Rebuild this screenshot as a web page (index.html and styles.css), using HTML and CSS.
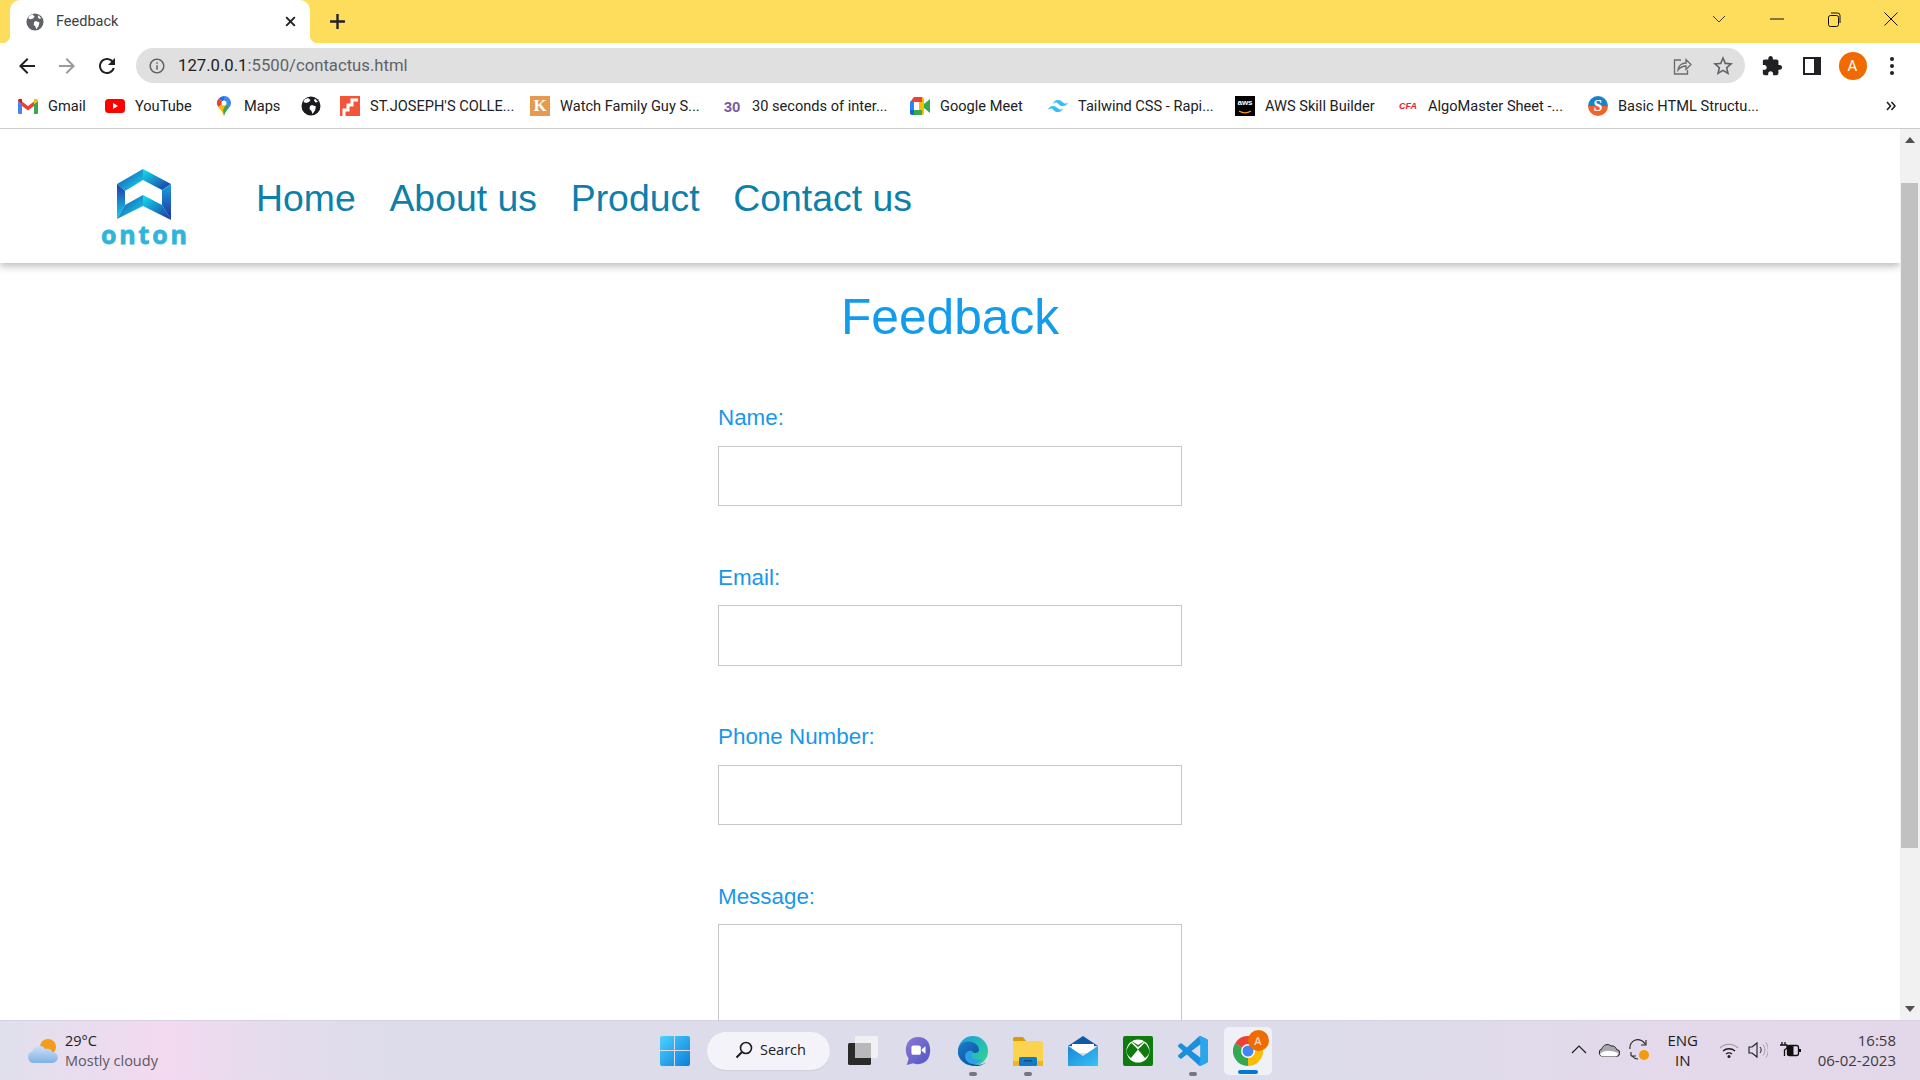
FILE: index.html
```html
<!DOCTYPE html>
<html lang="en">
<head>
<meta charset="utf-8">
<title>Feedback</title>
<link rel="stylesheet" href="styles.css">
</head>
<body>
<div class="screen">
  <header class="tabstrip">
    <div class="tab">
      <svg class="ico18" viewBox="0 0 20 20"><circle cx="10" cy="10" r="9.5" fill="#5f6368"/><path d="M7 1.5 9.5 4 8 6 5 7 2.5 6 3.500 3.500ZM11 9l4 1.500-1 4-2.500 3.500-1-3-2-2 .5-3ZM14 2.500l3 3.500-2.500 .5-1.500-2Z" fill="#fff"/></svg>
      <span class="tab-title">Feedback</span>
      <svg class="tab-close" viewBox="0 0 12 12"><path d="M2 2l8 8M10 2l-8 8" stroke="#202124" stroke-width="1.800"/></svg>
    </div>
    <svg class="tab-new" viewBox="0 0 16 16"><path d="M8 1v14M1 8h14" stroke="#202124" stroke-width="2.200"/></svg>
    <div class="winctl">
      <span class="wincell"><svg width="14" height="8" viewBox="0 0 14 8"><path d="M1 1l6 6 6-6" fill="none" stroke="#3c3c3c"/></svg></span>
      <span class="wincell"><svg width="14" height="2" viewBox="0 0 14 2"><path d="M0 1h14" stroke="#111"/></svg></span>
      <span class="wincell"><svg width="14" height="15" viewBox="0 0 14 15"><rect x="1.500" y="3.500" width="10" height="11" rx="2" fill="none" stroke="#111"/><path d="M4 1h6.500a2.500 2.500 0 0 1 2.500 2.500V11" fill="none" stroke="#111"/></svg></span>
      <span class="wincell"><svg width="14" height="14" viewBox="0 0 14 14"><path d="M.5.500l13 13M13.500.500l-13 13" stroke="#111"/></svg></span>
    </div>
  </header>

  <div class="toolbar">
    <span class="tbcell"><svg class="ico24" viewBox="0 0 24 24"><path fill="#202124" d="M20 11H7.830l5.590-5.590L12 4l-8 8 8 8 1.410-1.410L7.830 13H20v-2z"/></svg></span>
    <span class="tbcell"><svg class="ico24" viewBox="0 0 24 24"><path fill="#9a9a9a" d="M4 11h12.170l-5.590-5.590L12 4l8 8-8 8-1.410-1.410L16.170 13H4v-2z"/></svg></span>
    <span class="tbcell"><svg class="ico24" viewBox="0 0 24 24"><path fill="#202124" d="M17.650 6.350C16.200 4.900 14.210 4 12 4c-4.420 0-7.990 3.580-7.990 8s3.570 8 7.990 8c3.730 0 6.840-2.550 7.730-6h-2.080c-.82 2.330-3.040 4-5.650 4-3.310 0-6-2.690-6-6s2.690-6 6-6c1.660 0 3.140.69 4.220 1.780L13 11h7V4l-2.350 2.350z"/></svg></span>
    <div class="urlbar">
      <svg class="ico18 url-info" viewBox="0 0 24 24"><path fill="#5f6368" d="M11 7h2v2h-2zm0 4h2v6h-2zm1-9C6.480 2 2 6.480 2 12s4.480 10 10 10 10-4.480 10-10S17.520 2 12 2zm0 18c-4.410 0-8-3.590-8-8s3.590-8 8-8 8 3.590 8 8-3.590 8-8 8z"/></svg>
      <span class="url-text"><span class="url-host">127.0.0.1</span>:5500/contactus.html</span>
      <svg class="url-share" viewBox="0 0 20 20"><path d="M9 4H2.500v14h13v-4" fill="none" stroke="#6b6b6b" stroke-width="1.300"/><path d="M6 14c.5-4.500 4-7 8-7V3.500l5 5-5 5V10c-3.500 0-6 1.500-8 4z" fill="none" stroke="#6b6b6b" stroke-width="1.300"/></svg>
      <svg class="ico24 url-star" viewBox="0 0 24 24"><path fill="#5f6368" d="M22 9.240l-7.190-.62L12 2 9.190 8.630 2 9.240l5.460 4.730L5.820 21 12 17.270 18.180 21l-1.630-7.030L22 9.240zM12 15.400l-3.760 2.270 1-4.280-3.320-2.880 4.380-.38L12 6.100l1.710 4.040 4.380.38-3.320 2.880 1 4.280L12 15.400z"/></svg>
    </div>
    <span class="tbcell"><svg class="ico22" viewBox="0 0 24 24"><path fill="#202124" d="M20.500 11H19V7c0-1.100-.9-2-2-2h-4V3.500C13 2.120 11.880 1 10.500 1S8 2.120 8 3.500V5H4c-1.100 0-1.990.9-1.990 2v3.800H3.500c1.490 0 2.700 1.210 2.700 2.700s-1.210 2.700-2.700 2.700H2V20c0 1.100.9 2 2 2h3.800v-1.500c0-1.490 1.210-2.700 2.700-2.700 1.490 0 2.700 1.210 2.700 2.700V22H17c1.100 0 2-.9 2-2v-4h1.500c1.380 0 2.500-1.120 2.500-2.500S21.880 11 20.500 11z"/></svg></span>
    <span class="tbcell"><svg class="ico18" viewBox="0 0 18 18"><rect x="1" y="1" width="16" height="16" fill="none" stroke="#202124" stroke-width="2"/><rect x="11" y="1" width="6" height="16" fill="#202124"/></svg></span>
    <span class="tbcell"><span class="avatar">A</span></span>
    <span class="tbcell"><svg class="ico22" viewBox="0 0 22 22"><circle cx="11" cy="4" r="2" fill="#202124"/><circle cx="11" cy="11" r="2" fill="#202124"/><circle cx="11" cy="18" r="2" fill="#202124"/></svg></span>
  </div>

  <nav class="bookmarks">
    <a class="bm bm-gmail"><svg class="ico20" viewBox="0 0 20 16"><path d="M0 3v11.500A1.500 1.500 0 0 0 1.500 16H4V6Z" fill="#4285f4"/><path d="M20 3v11.500a1.500 1.500 0 0 1-1.500 1.500H16V6Z" fill="#34a853"/><path d="M4 8V3.500L10 8l6-4.500V8l-6 4.500Z" fill="#ea4335"/><path d="M0 3C0 .8 2.400 0 4 1.200V6Z" fill="#c5221f"/><path d="M20 3c0-2.200-2.400-3-4-1.800V6Z" fill="#fbbc04"/></svg><span>Gmail</span></a>
    <a class="bm bm-yt"><svg class="ico20" viewBox="0 0 20 16"><rect y="1" width="20" height="14" rx="3.500" fill="#f00"/><path d="M8 5l5 3-5 3z" fill="#fff"/></svg><span>YouTube</span></a>
    <a class="bm bm-maps"><svg class="ico20" viewBox="0 0 20 20"><path d="M10 0a7 7 0 0 1 5.300 11.500L10 6.500Z" fill="#4285f4"/><path d="M10 0a7 7 0 0 0-5.300 2.500L10 7Z" fill="#1a73e8"/><path d="M4.700 2.500A7 7 0 0 0 4.300 11L10 7Z" fill="#ea4335"/><path d="M4.300 11C6 13.500 8 15 10 20l3-7.500L10 7Z" fill="#fbbc04"/><path d="M15.300 11.500C13 14 11 16 10 20l-1-6 3-6Z" fill="#34a853"/><circle cx="10" cy="7" r="2.500" fill="#fff"/></svg><span>Maps</span></a>
    <a class="bm bm-globe"><svg class="ico20" viewBox="0 0 20 20"><circle cx="10" cy="10" r="9.500" fill="#1b1b1f"/><path d="M7 2 9.500 4 8 6 5 7 2.500 6 3.500 3.500ZM11 9l4 1.500-1 4-2.500 3.500-1-3-2-2 .5-3ZM14 2.500l3 3.500-2.500 .5-1.500-2Z" fill="#fff"/></svg></a>
    <a class="bm bm-st"><svg class="ico20" viewBox="0 0 20 20"><rect width="20" height="20" fill="#f4553a"/><path d="M4 20v-6h4v-5h4V4h6" fill="none" stroke="#fff" stroke-width="3"/></svg><span>ST.JOSEPH'S COLLE...</span></a>
    <a class="bm bm-k"><span class="fav-k">K</span><span>Watch Family Guy S...</span></a>
    <a class="bm bm-30"><span class="fav-30">30</span><span>30 seconds of inter...</span></a>
    <a class="bm bm-meet"><svg class="ico20" viewBox="0 0 20 18"><path d="M4 0h8v5H4z" fill="#ea4335"/><path d="M4 0v5H0Z" fill="#ea4335"/><path d="M0 5h4v8H0z" fill="#2684fc"/><path d="M0 13h4v5H2a2 2 0 0 1-2-2Z" fill="#1967d2"/><path d="M4 13h8v5H4z" fill="#34a853"/><path d="M12 0a2 2 0 0 1 2 2v14a2 2 0 0 1-2 2V13H9V5h3Z" fill="#fbbc04"/><path d="M14 7l6-5v14l-6-5Z" fill="#34a853"/></svg><span>Google Meet</span></a>
    <a class="bm bm-tw"><svg class="ico20" viewBox="0 0 20 14"><path d="M10 1C7.300 1 5.700 2.300 5 5c1-1.300 2.200-1.800 3.500-1.500 .8.200 1.300.8 1.900 1.400C11.400 5.800 12.500 7 15 7c2.700 0 4.300-1.300 5-4-1 1.300-2.200 1.800-3.500 1.500-.8-.2-1.300-.8-1.900-1.400C13.600 2.200 12.500 1 10 1ZM5 7c-2.700 0-4.300 1.300-5 4 1-1.300 2.200-1.800 3.500-1.500 .8.200 1.300.8 1.900 1.400C6.400 11.800 7.500 13 10 13c2.700 0 4.300-1.300 5-4-1 1.300-2.200 1.800-3.500 1.500-.8-.2-1.300-.8-1.900-1.400C8.600 8.200 7.500 7 5 7Z" fill="#38bdf8"/></svg><span>Tailwind CSS - Rapi...</span></a>
    <a class="bm bm-aws"><span class="fav-aws">aws<svg class="aws-smile" viewBox="0 0 14 4"><path d="M1 1c4 2.500 8 2.500 12 0" fill="none" stroke="#f90" stroke-width="1.300"/></svg></span><span>AWS Skill Builder</span></a>
    <a class="bm bm-cfa"><span class="fav-cfa">CFA</span><span>AlgoMaster Sheet -...</span></a>
    <a class="bm bm-s"><span class="fav-s">S</span><span>Basic HTML Structu...</span></a>
    <svg class="bm-more" viewBox="0 0 10 10"><path d="M1 1l3.500 4L1 9M5.500 1 9 5 5.500 9" fill="none" stroke="#202124" stroke-width="1.600"/></svg>
  </nav>

  <div class="viewport">
    <main class="page">
      <div class="navbar">
        <a class="logo">
          <svg class="logo-mark" viewBox="37 19 54 52">
            <defs>
              <linearGradient id="lg1" x1="0" y1="0" x2="1" y2="1"><stop offset="0" stop-color="#1f3fae"/><stop offset="1" stop-color="#10e4ee"/></linearGradient>
              <linearGradient id="lg2" x1="1" y1="1" x2="0" y2="0"><stop offset="0" stop-color="#1c2f9f"/><stop offset="1" stop-color="#12e2ee"/></linearGradient>
              <linearGradient id="lg3" x1="0" y1="0" x2="0" y2="1"><stop offset="0" stop-color="#2039a8"/><stop offset="1" stop-color="#14d6ea"/></linearGradient>
              <linearGradient id="lg4" x1="0" y1="0" x2="0" y2="1"><stop offset="0" stop-color="#1aa0dc"/><stop offset="1" stop-color="#1f2ea0"/></linearGradient>
            </defs>
            <path d="M63 19 37 34 45 41 63 30Z" fill="url(#lg1)"/>
            <path d="M63 19 91 34 82 40 63 30Z" fill="url(#lg2)"/>
            <path d="M37 34 45 41V55L37 69Z" fill="url(#lg3)"/>
            <path d="M91 34 82 40V55L91 70Z" fill="url(#lg4)"/>
            <path d="M37 69 63 56V45L45 55Z" fill="url(#lg1)"/>
            <path d="M63 45 82 55 91 70 63 56Z" fill="url(#lg2)"/>
          </svg>
          <span class="logo-word">onton</span>
        </a>
        <a class="nav-link">Home</a>
        <a class="nav-link">About us</a>
        <a class="nav-link">Product</a>
        <a class="nav-link">Contact us</a>
      </div>
      <h1 class="title">Feedback</h1>
      <form class="form">
        <div class="field"><label class="label">Name:</label><input class="control" type="text"></div>
        <div class="field"><label class="label">Email:</label><input class="control" type="text"></div>
        <div class="field"><label class="label">Phone Number:</label><input class="control" type="text"></div>
        <div class="field"><label class="label">Message:</label><textarea class="control control-area"></textarea></div>
      </form>
    </main>
    <aside class="scrollbar">
      <svg class="sb-arrow sb-up" viewBox="0 0 10 6"><path d="M5 0l5 6H0z" fill="#505050"/></svg>
      <div class="sb-thumb"></div>
      <svg class="sb-arrow sb-down" viewBox="0 0 10 6"><path d="M5 6l5-6H0z" fill="#505050"/></svg>
    </aside>
  </div>

  <footer class="taskbar">
    <div class="weather">
      <svg class="weather-ico" viewBox="0 0 32 26"><defs><linearGradient id="wc" x1="0" y1="0" x2="0" y2="1"><stop offset="0" stop-color="#cfe0f7"/><stop offset="1" stop-color="#7fb2e6"/></linearGradient></defs><circle cx="22" cy="9" r="8" fill="#f59b1c"/><path d="M8 25a6 6 0 0 1-1.500-11.800C8 7 16 6 19 11c3-1 6.500 0 7.500 3A5.500 5.500 0 0 1 26 25Z" fill="url(#wc)"/></svg>
      <div class="weather-text"><span class="temp">29°C</span><span class="cond">Mostly cloudy</span></div>
    </div>
    <div class="apps">
      <span class="app app-win"><svg class="ico30" viewBox="0 0 30 30"><defs><linearGradient id="w1" x1="0" y1="0" x2="1" y2="1"><stop offset="0" stop-color="#4cd2ff"/><stop offset="1" stop-color="#0a7fd8"/></linearGradient></defs><path d="M0 2a2 2 0 0 1 2-2h12v14H0ZM15 0h13a2 2 0 0 1 2 2v12H15ZM0 15h14v15H2a2 2 0 0 1-2-2ZM15 15h15v13a2 2 0 0 1-2 2H15Z" fill="url(#w1)"/></svg></span>
      <span class="searchpill"><svg class="ico18" viewBox="0 0 18 18"><circle cx="11" cy="7" r="5.500" fill="none" stroke="#1c1c1c" stroke-width="1.600"/><path d="M7 11l-5.500 5.500" stroke="#1c1c1c" stroke-width="2"/></svg><span>Search</span></span>
      <span class="app"><svg class="ico30" viewBox="0 0 30 30"><rect x="0" y="7" width="23" height="22" rx="1.500" fill="#2a2a2a"/><rect x="7" y="0" width="23" height="22" rx="1.500" fill="#f4f4f6" fill-opacity=".85"/><rect x="7" y="7" width="16" height="15" fill="#b9b9bd"/></svg></span>
      <span class="app"><svg class="ico30" viewBox="0 0 30 32"><defs><linearGradient id="tm" x1="0" y1="0" x2="1" y2="1"><stop offset="0" stop-color="#8c78d8"/><stop offset="1" stop-color="#4f56c4"/></linearGradient></defs><path d="M15 1C7 1 2 7 2 15c0 4 1.500 7 3 9l-2 7 7-2c2 .8 3.500 1 5 1 8 0 13-6 13-15S23 1 15 1Z" fill="url(#tm)"/><rect x="8" y="10" width="10" height="10" rx="2" fill="#fff"/><path d="M19 14l4-3v8l-4-3Z" fill="#fff"/></svg></span>
      <span class="app"><svg class="ico30" viewBox="0 0 30 30"><defs><linearGradient id="ed1" x1="0" y1="0" x2="1" y2="1"><stop offset="0" stop-color="#1b9de2"/><stop offset="1" stop-color="#2fd88c"/></linearGradient><linearGradient id="ed2" x1="0" y1="0" x2="1" y2="1"><stop offset="0" stop-color="#1a7fd0"/><stop offset="1" stop-color="#0c3f8f"/></linearGradient></defs><circle cx="15" cy="15" r="15" fill="url(#ed1)"/><path d="M0 14C1 7 8 4 14 6c5 1.500 7 5 7 8 0 2-2 3-4 3-1.500 0-3-1-3-2-4 0-6 3-5 7 1 4 6 7 11 7 3 0 6-1 8-3-3 3.500-7 4-9 4C7 30-1 23 0 14Z" fill="url(#ed2)"/><path d="M14 15c-1.500 2-1 5 1 7 2 1.500 6 2 9 1-2 3-5 5-9 5-5 0-8-4-8-8 0-3 3-6 7-5Z" fill="#2d9fe8"/></svg></span>
      <span class="app"><svg class="ico30" viewBox="0 0 30 30"><path d="M0 3a2 2 0 0 1 2-2h8l3 4H0Z" fill="#d99a0b"/><path d="M0 5h28a2 2 0 0 1 2 2v22H2a2 2 0 0 1-2-2Z" fill="#fcd34f"/><rect y="25" width="30" height="5" fill="#f0b820"/><rect x="6" y="21" width="18" height="9" rx="1.500" fill="#1479c9"/><rect x="11" y="24" width="8" height="1.500" fill="#0c4f8f"/></svg></span>
      <span class="app"><svg class="ico30" viewBox="0 0 30 30"><defs><linearGradient id="ml" x1="0" y1="0" x2="1" y2="1"><stop offset="0" stop-color="#1a86d4"/><stop offset="1" stop-color="#36c3f7"/></linearGradient></defs><path d="M15 0 30 10H0Z" fill="#0e5aa8"/><path d="M4 8h22v9H4Z" fill="#fff"/><path d="M0 10 15 20 30 10V30H0Z" fill="url(#ml)"/></svg></span>
      <span class="app"><svg class="ico30" viewBox="0 0 30 30"><rect width="30" height="30" rx="2" fill="#107c10"/><circle cx="15" cy="15" r="11.500" fill="#fff"/><path d="M7.500 4.500 15 11l7.500-6.500L15 9ZM3.500 15c1-3.500 2.500-6 5-8L15 13.500 8 22c-2.500-2-4.500-4-4.500-7ZM26.500 15c-1-3.500-2.500-6-5-8L15 13.500 22 22c2.500-2 4.500-4 4.500-7Z" fill="#107c10"/></svg></span>
      <span class="app"><svg class="ico30" viewBox="0 0 100 100"><path d="M96.500 10.800 75.900.9a6.200 6.200 0 0 0-7.100 1.200L29.500 38 12.300 25a4.200 4.200 0 0 0-5.300.2l-5.500 5a4.200 4.200 0 0 0 0 6.200L16.400 50 1.500 63.600a4.200 4.200 0 0 0 0 6.200l5.500 5a4.200 4.200 0 0 0 5.300.2l17.200-13 39.300 35.900a6.200 6.200 0 0 0 7.100 1.200l20.600-9.900a6.200 6.200 0 0 0 3.500-5.600V16.400a6.200 6.200 0 0 0-3.500-5.600ZM75 72.700 45.200 50 75 27.300Z" fill="#1a8fdc"/><path d="M70 1.500c2-1.200 4-1.300 5.900-.6l20.600 9.900A6.200 6.200 0 0 1 100 16.400v67.200a6.200 6.200 0 0 1-3.500 5.600L75.900 99.100c-2 .7-4 .6-5.900-.6L75 72.700V27.300Z" fill="#2aa6ec"/></svg></span>
      <span class="app app-active">
        <svg class="ico30" viewBox="0 0 30 30"><path d="M15 15 2 7.500A15 15 0 0 1 28 7.500Z" fill="#ea4335"/><path d="M15 15 28 7.500A15 15 0 0 1 15 30Z" fill="#fbbc04"/><path d="M15 15 15 30A15 15 0 0 1 2 7.500Z" fill="#34a853"/><circle cx="15" cy="15" r="7" fill="#fff"/><circle cx="15" cy="15" r="5.500" fill="#4285f4"/></svg>
        <span class="chrome-badge">A</span>
      </span>
    </div>
    <div class="tray">
      <svg class="tray-chev" viewBox="0 0 16 9"><path d="M1 8l7-7 7 7" fill="none" stroke="#1c1c1c" stroke-width="1.200"/></svg>
      <svg class="tray-cloud" viewBox="0 0 22 14"><path d="M5 13.500a4 4 0 0 1-1-7.800C5 2 10 0 13 3c3-.5 5 1 5.500 3.500A3.500 3.500 0 0 1 18 13.500Z" fill="#a9a7ae" stroke="#222"/><path d="M2 11c4-4 10-4 18-1 0 2-1 3.500-2 3.500H5c-1.500 0-2.500-1-3-2.500Z" fill="#fff"/></svg>
      <span class="tray-sync"><svg viewBox="0 0 22 22"><path d="M2 10A8 8 0 0 1 17 5M18 1v5h-5M3 17h5M3 17v-4M4 17a8 8 0 0 0 6 3" fill="none" stroke="#222" stroke-width="1.100"/><circle cx="16" cy="16" r="5" fill="#f59a0c"/></svg></span>
      <span class="tray-lang"><span>ENG</span><span>IN</span></span>
      <svg class="tray-wifi" viewBox="0 0 20 16"><path d="M1 6c5-5 13-5 18 0" fill="none" stroke="#9a96a0" stroke-width="1.200"/><path d="M4 9c3.500-3 8.500-3 12 0M7 12c2-1.500 4-1.500 6 0" fill="none" stroke="#1c1c1c" stroke-width="1.300"/><circle cx="10" cy="14.500" r="1.500" fill="#1c1c1c"/></svg>
      <svg class="tray-vol" viewBox="0 0 20 18"><path d="M1 6h3l5-4v14l-5-4H1Z" fill="none" stroke="#1c1c1c" stroke-width="1.100"/><path d="M12 6c1.500 2 1.500 4 0 6" fill="none" stroke="#1c1c1c"/><path d="M15 3.500c2.500 3.500 2.500 7.500 0 11M18 1.500c3 4.500 3 10.500 0 15" fill="none" stroke="#a5a1ab"/></svg>
      <svg class="tray-bat" viewBox="0 0 22 16"><path d="M2 0v3M5 0v3M0 3h7v3L4.500 8v6" fill="none" stroke="#111" stroke-width="1.300"/><rect x="7.500" y="3.500" width="11" height="10" rx="2" fill="none" stroke="#111" stroke-width="1.300"/><rect x="7.500" y="3.500" width="6" height="10" fill="#111"/><rect x="19" y="7" width="2" height="3" fill="#111"/></svg>
      <span class="tray-time"><span>16:58</span><span>06-02-2023</span></span>
    </div>
  </footer>
</div>
</body>
</html>
```

FILE: styles.css
```css
* { box-sizing: border-box; }
html, body { margin: 0; height: 100%; overflow: hidden; }
body { font-family: "Liberation Sans", Arial, sans-serif; background: #fff; }
svg { display: block; flex: none; }
a { color: inherit; text-decoration: none; }

.screen { width: 1920px; height: 1080px; display: flex; flex-direction: column; }

.ico18 { width: 18px; height: 18px; }
.ico20 { width: 20px; height: 20px; }
.ico22 { width: 22px; height: 22px; }
.ico24 { width: 24px; height: 24px; }
.ico30 { width: 30px; height: 30px; }

/* tab strip */
.tabstrip { height: 43px; flex: none; background: #ffdd5c; display: flex; align-items: flex-end; padding-left: 10px; font-family: Roboto, "Open Sans", sans-serif; }
.tab { position: relative; width: 300px; height: 43px; background: #fff; border-radius: 10px 10px 0 0; display: flex; align-items: center; padding: 0 13px 0 16px; color: #3c4043; font-size: 14.500px; }
.tab::before, .tab::after { content: ""; position: absolute; bottom: 0; width: 8px; height: 8px; }
.tab::before { left: -8px; background: radial-gradient(circle at 0 0, #ffdd5c 8px, #fff 8.500px); }
.tab::after { right: -8px; background: radial-gradient(circle at 100% 0, #ffdd5c 8px, #fff 8.500px); }
.tab-title { margin-left: 12px; flex: 1; }
.tab-close { width: 13px; height: 13px; }
.tab-new { width: 17px; height: 17px; margin: 0 0 13px 19px; }
.winctl { margin-left: auto; display: flex; height: 38px; align-items: center; align-self: flex-start; padding-right: 0; }
.wincell { width: 57.300px; display: flex; justify-content: center; }

/* toolbar */
.toolbar { height: 45px; flex: none; background: #fff; display: flex; align-items: center; padding: 0 8px 0 7px; font-family: Roboto, "Open Sans", sans-serif; }
.tbcell { width: 40px; height: 40px; display: flex; align-items: center; justify-content: center; flex: none; }
.urlbar { flex: 1; height: 35px; margin: 0 7px 0 9px; background: #e0e0e0; border-radius: 18px; display: flex; align-items: center; padding-left: 12px; font-size: 16.700px; color: #5f6368; }
.url-info { margin-right: 12px; }
.url-host { color: #202124; }
.url-text { flex: 1; }
.url-share { width: 20px; height: 20px; }
.url-star { margin: 0 10px 0 19px; }
.avatar { width: 28px; height: 28px; border-radius: 50%; background: #f06a00; color: #fff; font-size: 15px; display: flex; align-items: center; justify-content: center; margin-left: 1px; }

/* bookmarks */
.bookmarks { height: 41px; flex: none; background: #fff; border-bottom: 1px solid #ccc; display: flex; align-items: center; padding: 0 0 4px 18px; color: #202124; font-family: Roboto, "Open Sans", sans-serif; font-size: 14.600px; }
.bm { display: flex; align-items: center; gap: 10px; white-space: nowrap; flex: none; }
.bm-gmail { width: 87px; }
.bm-yt { width: 109px; }
.bm-maps { width: 87px; }
.bm-globe { width: 39px; }
.bm-st { width: 190px; }
.bm-k { width: 192px; }
.bm-30 { width: 188px; }
.bm-meet { width: 138px; }
.bm-tw { width: 187px; }
.bm-aws { width: 163px; }
.bm-cfa { width: 190px; }
.bm-s { width: 298px; }
.bm-more { width: 10px; height: 10px; }
.fav-k { width: 20px; height: 20px; background: #e69a4e; color: #fff; font: 700 17px "Liberation Serif", serif; display: flex; align-items: center; justify-content: center; }
.fav-30 { width: 20px; font: 700 15px "Liberation Sans", sans-serif; color: #7a5ba6; text-align: center; }
.fav-aws { position: relative; width: 20px; height: 20px; background: #000; color: #fff; font: 700 8px/13px "Liberation Sans", sans-serif; text-align: center; }
.aws-smile { position: absolute; left: 3px; bottom: 2px; width: 14px; height: 4px; }
.fav-cfa { width: 20px; color: #e8202e; font: italic 700 9px "Liberation Sans", sans-serif; text-align: center; }
.fav-s { width: 20px; height: 20px; border-radius: 50%; background: linear-gradient(#1c82c8 50%, #f0622e 50%); color: #fff; font: 700 16px/20px "Liberation Serif", serif; text-align: center; }

/* page */
.viewport { flex: 1; min-height: 0; display: flex; }
.page { flex: 1; min-width: 0; overflow: hidden; background: #fff; }
.navbar { height: 134px; background: #fff; display: flex; align-items: center; padding: 4px 0 0 100px; box-shadow: 0 3px 8px rgba(0, 0, 0, .28); gap: 33.700px; }
.logo { width: 88px; margin: 15px 34.300px 0 0; display: flex; flex-direction: column; align-items: center; gap: 6px; }
.logo-mark { width: 54px; height: 52px; }
.logo-word { font: 700 25px/15px "Open Sans", sans-serif; color: #2fb5da; letter-spacing: 2.800px; margin-right: -2.800px; -webkit-text-stroke: .8px #2fb5da; }
.nav-link { font-size: 37.400px; line-height: 44px; color: #0d80aa; }
.title { margin: 24px 0 0; font-size: 49.700px; font-weight: 400; line-height: 60px; color: #129cec; text-align: center; }
.form { width: 464px; margin: 58px auto 0; display: flex; flex-direction: column; gap: 58.500px; }
.field { display: flex; flex-direction: column; gap: 14.500px; }
.label { font-size: 22.400px; line-height: 26px; color: #1a97e8; }
.control { width: 100%; height: 60.500px; border: 1.200px solid #c6c6c6; background: #fff; padding: 0; margin: 0; display: block; }
.control-area { height: 130px; resize: none; }

/* scrollbar */
.scrollbar { width: 20px; flex: none; background: #f1f1f1; display: flex; flex-direction: column; align-items: center; padding-top: 8px; }
.sb-arrow { width: 10px; height: 6px; }
.sb-thumb { width: 17px; height: 665px; background: #c1c1c1; margin: 40px 1px 0 0; }
.sb-down { margin-top: auto; margin-bottom: 8px; }

/* taskbar */
.taskbar { height: 60px; flex: none; border-top: 1px solid #d6d2e0; background: linear-gradient(90deg, #e0e0ec 0, #f3d9f1 170px, #e6dcee 260px, #dcdcea 420px, #dcdcea 1300px, #e4d9ea 1700px, #e2d8ea 100%); display: grid; grid-template-columns: 648px auto 1fr; align-items: center; font-family: "Open Sans", sans-serif; color: #1c1c1c; }
.weather { display: flex; align-items: center; padding-left: 26px; }
.weather-ico { width: 32px; height: 26px; }
.weather-text { display: flex; flex-direction: column; margin-left: 7px; line-height: 20px; }
.temp { font-size: 14.500px; }
.cond { font-size: 14.500px; color: #5c5864; }
.apps { display: flex; align-items: center; height: 59px; }
.app { position: relative; width: 55px; height: 48px; display: flex; align-items: center; justify-content: center; flex: none; }
.app-win { width: 54px; }
.searchpill { width: 123px; height: 38px; margin: 0 5.500px 0 5px; border-radius: 19px; background: #f3f3f9; display: flex; align-items: center; gap: 7px; padding: 0 0 2px 28px; font-size: 14.500px; box-shadow: 0 1px 1px rgba(0, 0, 0, .06); }
.app:nth-child(5)::after, .app:nth-child(6)::after, .app:nth-child(9)::after { content: ""; position: absolute; left: 23px; bottom: -1px; width: 8px; height: 4px; border-radius: 2px; background: #77757f; }
.app-active { background: #f0f0f7; border-radius: 5px; width: 48px; margin-left: 3px; }
.app-active::after { content: ""; position: absolute; left: 14px; bottom: 1px; width: 20px; height: 4px; border-radius: 2px; background: #0078d4; }
.chrome-badge { position: absolute; left: 24px; top: 3px; width: 21px; height: 21px; border-radius: 50%; background: #ef6c00; color: #fbd6b4; font-size: 11px; font-weight: 600; display: flex; align-items: center; justify-content: center; }
.tray { display: flex; align-items: center; justify-content: flex-end; padding: 0 24px 2px 0; font-size: 15px; }
.tray-chev { width: 16px; height: 9px; margin-right: 11px; }
.tray-cloud { width: 22px; height: 14px; margin-right: 8px; }
.tray-sync { width: 22px; height: 22px; margin-right: 16px; }
.tray-lang { display: flex; flex-direction: column; align-items: center; line-height: 20px; margin-right: 19px; width: 34px; }
.tray-wifi { width: 20px; height: 16px; margin-right: 9px; }
.tray-vol { width: 20px; height: 18px; margin-right: 12px; }
.tray-bat { width: 22px; height: 16px; margin-right: 16px; }
.tray-time { display: flex; flex-direction: column; align-items: flex-end; line-height: 20px; color: #3a3a40; }
```
